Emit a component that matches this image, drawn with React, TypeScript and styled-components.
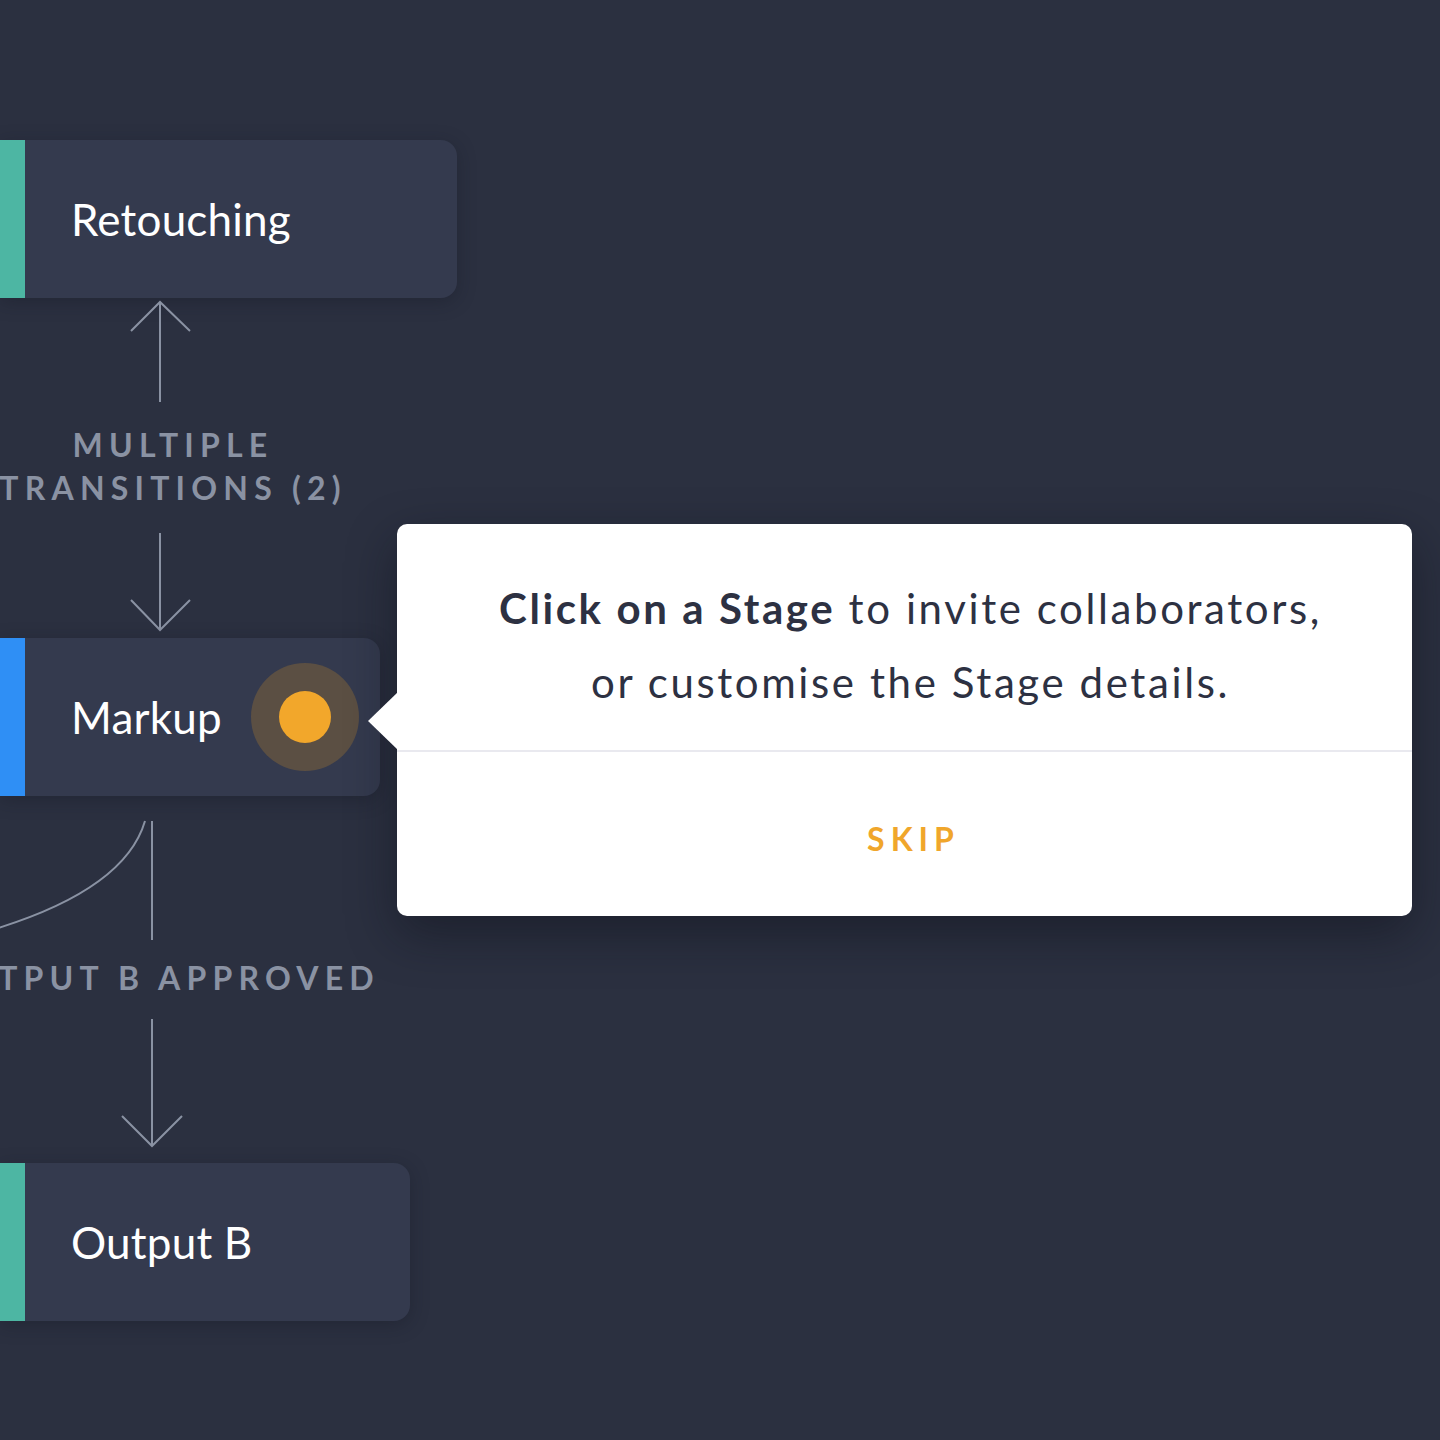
import React from "react";
import styled, { createGlobalStyle } from "styled-components";

const Global = createGlobalStyle`
  html, body {
    margin: 0;
    padding: 0;
    background: #2b3040;
    font-family: "Lato", "Noto Sans", sans-serif;
  }
  #root {
    width: 1440px;
    height: 1440px;
    overflow: hidden;
  }
`;

const Canvas = styled.div`
  width: 1440px;
  height: 1440px;
  background: #2b3040;
  display: flex;
  flex-direction: column;
  padding-top: 140px;
  box-sizing: border-box;
`;

const Card = styled.div<{ $width: number; $accent: string }>`
  position: relative;
  width: ${(p) => p.$width}px;
  height: 158px;
  box-sizing: border-box;
  display: flex;
  align-items: center;
  justify-content: space-between;
  background: #343a4e;
  border-left: 25px solid ${(p) => p.$accent};
  border-radius: 0 16px 16px 0;
  padding: 0 21px 0 46px;
  box-shadow: 0 4px 18px rgba(20, 23, 33, 0.35);
  flex-shrink: 0;
`;

const CardTitle = styled.span`
  color: #ffffff;
  font-size: 44px;
  font-weight: 400;
  letter-spacing: 0.2px;
  line-height: 1;
`;

const Pulse = styled.div`
  width: 108px;
  height: 108px;
  border-radius: 50%;
  background: #5b4f43;
  display: flex;
  align-items: center;
  justify-content: center;
`;

const Dot = styled.div`
  width: 52px;
  height: 52px;
  border-radius: 50%;
  background: #f2a72b;
`;

const Connector = styled.div<{ $width: number; $height: number }>`
  position: relative;
  width: ${(p) => p.$width}px;
  height: ${(p) => p.$height}px;
  flex-shrink: 0;
  display: flex;
  flex-direction: column;
  align-items: center;
`;

const Lines = styled.svg`
  position: absolute;
  left: 0;
  top: 0;
  overflow: visible;
`;

const Label = styled.div<{ $top: number }>`
  margin-top: ${(p) => p.$top}px;
  color: #8a92a3;
  font-size: 32px;
  font-weight: 700;
  letter-spacing: 6.2px;
  line-height: 43px;
  text-align: center;
  white-space: nowrap;
  padding-left: 6px;
`;

const MarkupRow = styled.div`
  position: relative;
  display: flex;
  align-items: center;
`;

const Tooltip = styled.div`
  position: absolute;
  left: 397px;
  top: -114px;
  width: 1015px;
  height: 392px;
  background: #ffffff;
  border-radius: 10px;
  box-shadow: 0 18px 50px rgba(12, 14, 22, 0.45);
  display: flex;
  flex-direction: column;
  &::before {
    content: "";
    position: absolute;
    left: -29px;
    top: 168px;
    border-style: solid;
    border-width: 29px 30px 29px 0;
    border-color: transparent #ffffff transparent transparent;
  }
`;

const TipBody = styled.div`
  height: 228px;
  box-sizing: border-box;
  padding: 47px 0 0 12px;
  text-align: center;
  color: #2d3142;
  font-size: 42px;
  line-height: 74px;
  letter-spacing: 2.6px;
  border-bottom: 2px solid #e9e9ef;
  white-space: nowrap;
  b {
    font-weight: 700;
  }
`;

const TipFooter = styled.div`
  flex: 1;
  display: flex;
  align-items: center;
  justify-content: center;
  padding: 8px 0 0 18px;
`;

const Skip = styled.span`
  color: #f0a62b;
  font-size: 32px;
  font-weight: 700;
  letter-spacing: 6px;
`;

const stroke = "#8a92a3";

export default function App() {
  return (
    <>
      <Global />
      <Canvas>
        <Card $width={457} $accent="#4db6a3">
          <CardTitle>Retouching</CardTitle>
        </Card>

        <Connector $width={340} $height={340}>
          <Lines width="340" height="340">
            <g stroke={stroke} strokeWidth="2" fill="none">
              <line x1="160" y1="4" x2="160" y2="104" />
              <polyline points="131,33 160,4 190,33" />
              <line x1="160" y1="235" x2="160" y2="331" />
              <polyline points="131,302 160,332 190,302" />
            </g>
          </Lines>
          <Label $top={125}>
            MULTIPLE
            <br />
            TRANSITIONS (2)
          </Label>
        </Connector>

        <MarkupRow>
          <Card $width={380} $accent="#2f8ff5">
            <CardTitle>Markup</CardTitle>
            <Pulse>
              <Dot />
            </Pulse>
          </Card>
          <Tooltip>
            <TipBody>
              <b>Click on a Stage</b> to invite collaborators,
              <br />
              or customise the Stage details.
            </TipBody>
            <TipFooter>
              <Skip>SKIP</Skip>
            </TipFooter>
          </Tooltip>
        </MarkupRow>

        <Connector $width={310} $height={367}>
          <Lines width="310" height="367">
            <g stroke={stroke} strokeWidth="2" fill="none">
              <path d="M145 25 Q125 93 -5 133" />
              <line x1="152" y1="25" x2="152" y2="144" />
              <line x1="152" y1="223" x2="152" y2="349" />
              <polyline points="122,320 152,350 182,320" />
            </g>
          </Lines>
          <Label $top={160}>OUTPUT B APPROVED</Label>
        </Connector>

        <Card $width={410} $accent="#4db6a3">
          <CardTitle>Output B</CardTitle>
        </Card>
      </Canvas>
    </>
  );
}
